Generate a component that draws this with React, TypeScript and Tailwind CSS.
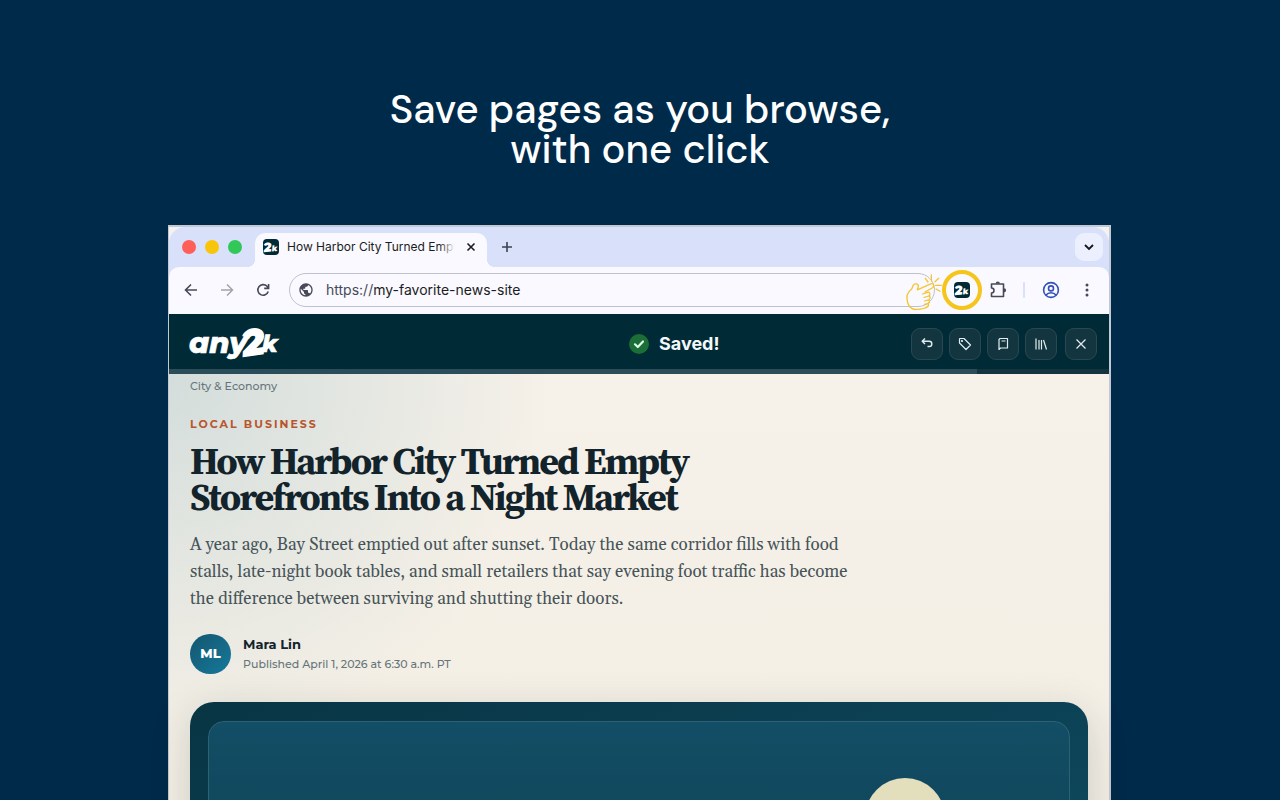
import { ReactNode } from 'react';

const montserrat = "font-['Montserrat','Inter',sans-serif]";

interface IconButtonProps {
  label: string;
  className?: string;
  children: ReactNode;
}

function IconButton({ label, className = '', children }: IconButtonProps) {
  return (
    <button aria-label={label} className={`flex items-center justify-center flex-shrink-0 ${className}`}>
      {children}
    </button>
  );
}

function ActionButton({ label, className = '', children }: IconButtonProps) {
  return (
    <IconButton
      label={label}
      className={`w-8 h-8 rounded-[9px] border border-[#2b4852] bg-[#12353f] text-[#e3edf0] ${className}`}
    >
      <svg viewBox="0 0 16 16" className="w-4 h-4" fill="none" stroke="currentColor" strokeWidth="1.2" strokeLinejoin="round">
        {children}
      </svg>
    </IconButton>
  );
}

function AppBadge() {
  return (
    <svg viewBox="0 0 16 16" className="w-4 h-4 flex-shrink-0 overflow-visible">
      <rect width="16" height="16" rx="4" fill="#002a35" />
      <g transform="rotate(-6 8 8)" fill="#fff" fontFamily="Montserrat, Inter, sans-serif" fontWeight="900" fontStyle="italic">
        <text x="0.5" y="12.5" fontSize="13">2</text>
        <text x="8.5" y="12.5" fontSize="8">k</text>
      </g>
    </svg>
  );
}

function Logo() {
  return (
    <svg viewBox="0 0 92 40" className="w-[92px] h-10 overflow-visible" role="img" aria-label="any2k">
      <g fill="#fff" stroke="#fff" fontFamily="Montserrat, Inter, sans-serif" fontWeight="800" fontStyle="italic">
        <text x="0" y="29" fontSize="29" strokeWidth="0.6">any</text>
        <text x="54" y="31" fontSize="36" strokeWidth="1.6" transform="rotate(-8 64 22)">2</text>
        <text x="73" y="28" fontSize="23" strokeWidth="0.6">k</text>
      </g>
    </svg>
  );
}

function ClickHand() {
  return (
    <svg viewBox="0 0 40 40" className="w-10 h-10" fill="none" stroke="#f5c431" strokeWidth="1.3" strokeLinecap="round" strokeLinejoin="round">
      <path d="M21 20l7.5-4.3c2.4-1.6 1-4.8-1.8-3.9L13.3 17.8l1-3.3c.5-2.6-3.8-3.7-5-1.4L7.7 17C3.5 20 2 25 3.6 30.5 5 35 8.5 38 13 37.4c4-.3 8-.8 10-2.4" />
      <path d="M18.5 22l5-1.7c2.6-.6 3.4 2.7 1 3.7L20 25.5M24.7 24c2 .4 2 3-.2 3.8L20.5 29M24.5 28c1.6.8 1.3 3-.7 3.6L20.5 32.5M23.8 31.7c1.2 1 .8 2.7-.8 3.3" />
      <path d="M21.3 6.3l2.7 3.7M27.3 3l.2 6M34.7 6.3L31 9.7M31.5 13.3h6M32 17l4 2.3" />
    </svg>
  );
}

function TabStrip() {
  return (
    <div className="flex items-end h-10 pl-[13px] pr-[6px] rounded-t-2xl bg-[#d9e0fa]">
      <div className="flex items-center gap-[9px] h-10">
        <span className="w-[14px] h-[14px] rounded-full bg-[#fe5f58]" />
        <span className="w-[14px] h-[14px] rounded-full bg-[#f9c50b]" />
        <span className="w-[14px] h-[14px] rounded-full bg-[#32c759]" />
      </div>
      <div className="relative flex items-center w-[232px] h-[34px] ml-[13px] pl-2 pr-[10px] pb-[6px] rounded-t-[10px] bg-[#f9f9ff]">
        <span className="absolute bottom-0 right-full w-2 h-2 bg-[radial-gradient(circle_at_top_left,transparent_8px,#f9f9ff_8px)]" />
        <span className="absolute bottom-0 left-full w-2 h-2 bg-[radial-gradient(circle_at_top_right,transparent_8px,#f9f9ff_8px)]" />
        <AppBadge />
        <div className="relative flex-1 ml-2 overflow-hidden whitespace-nowrap text-xs text-[#1b1c22]">
          How Harbor City Turned Empty
          <span className="absolute inset-y-0 right-0 w-4 bg-gradient-to-r from-transparent to-[#f9f9ff]" />
        </div>
        <IconButton label="Close tab" className="w-3 h-4 ml-[10px]">
          <svg viewBox="0 0 10 10" className="w-[10px] h-[10px]" stroke="#1b1c22" strokeWidth="1.6">
            <path d="M1.5 1.5l7 7M8.5 1.5l-7 7" />
          </svg>
        </IconButton>
      </div>
      <IconButton label="New tab" className="w-7 h-10 ml-[6px]">
        <svg viewBox="0 0 12 12" className="w-3 h-3" stroke="#3c4254" strokeWidth="1.6">
          <path d="M6 1v10M1 6h10" />
        </svg>
      </IconButton>
      <IconButton label="Search tabs" className="w-7 h-7 ml-auto mb-[6px] rounded-[9px] bg-[#eceffd]">
        <svg viewBox="0 0 10 10" className="w-[10px] h-[10px]" fill="none" stroke="#15161c" strokeWidth="1.8">
          <path d="M1 3l4 4 4-4" />
        </svg>
      </IconButton>
    </div>
  );
}

function Toolbar() {
  return (
    <div className="bg-[#d9e0fa]">
      <div className="flex items-center h-[47px] pl-3 pr-3 pb-px rounded-t-[10px] bg-[#f9f9ff] text-[#474958]">
        <IconButton label="Back" className="w-5 h-5">
          <svg viewBox="0 0 14 14" className="w-[14px] h-[14px]" fill="none" stroke="currentColor" strokeWidth="1.6">
            <path d="M13 7H2M7 1.5L1.5 7 7 12.5" />
          </svg>
        </IconButton>
        <IconButton label="Forward" className="w-5 h-5 ml-4 text-[#a2a3ac]">
          <svg viewBox="0 0 14 14" className="w-[14px] h-[14px]" fill="none" stroke="currentColor" strokeWidth="1.5">
            <path d="M1 7h11M7 1.5L12.5 7 7 12.5" />
          </svg>
        </IconButton>
        <IconButton label="Reload" className="w-5 h-5 ml-4">
          <svg viewBox="0 0 14 14" className="w-[14px] h-[14px]" fill="none" stroke="currentColor" strokeWidth="1.6">
            <path d="M12.2 8.5A5.3 5.3 0 1 1 11 3.3L12.4 5M12.6 1v4.4H8.2" />
          </svg>
        </IconButton>
        <label className="flex items-center flex-1 h-[34px] ml-4 pl-2 rounded-full border border-[#bfc1cc] text-sm">
          <svg viewBox="0 0 24 24" className="w-4 h-4 flex-shrink-0" fill="#474958">
            <path d="M12 2C6.48 2 2 6.48 2 12s4.48 10 10 10 10-4.48 10-10S17.52 2 12 2zm-1 17.93c-3.95-.49-7-3.85-7-7.93 0-.62.08-1.21.21-1.79L9 15v1c0 1.1.9 2 2 2v1.93zm6.9-2.54c-.26-.81-1-1.39-1.9-1.39h-1v-3c0-.55-.45-1-1-1H8v-2h2c.55 0 1-.45 1-1V7h2c1.1 0 2-.9 2-2v-.41c2.93 1.19 5 4.06 5 7.41 0 2.08-.8 3.97-2.1 5.39z" />
          </svg>
          <span className="ml-3">https://</span>
          <input
            type="text"
            aria-label="Address"
            defaultValue="my-favorite-news-site"
            className="flex-1 min-w-0 bg-transparent outline-none text-[#1b1c22]"
          />
        </label>
        <div className="relative ml-[7px]">
          <IconButton label="any2k" className="w-10 h-10 rounded-full border-4 border-[#f5c51c]">
            <AppBadge />
          </IconButton>
          <div className="absolute top-[2px] -left-[38px] pointer-events-none">
            <ClickHand />
          </div>
        </div>
        <IconButton label="Extensions" className="w-5 h-5 ml-[6px]">
          <svg viewBox="0 0 18 18" className="w-[18px] h-[18px]" fill="none" stroke="currentColor" strokeWidth="1.6" strokeLinejoin="round">
            <path d="M2.5 3H14.5V15.5H2.5V12C5.8 12 5.8 7 2.5 7z" />
            <path d="M7.5 2.5a1.3 1.3 0 0 1 2.6 0M15 8a1.3 1.3 0 0 1 0 2.6" fill="currentColor" />
          </svg>
        </IconButton>
        <span className="w-[2px] h-4 ml-[15px] rounded bg-[#d9e0fa]" />
        <IconButton label="Profile" className="w-5 h-5 ml-4 text-[#3350b8]">
          <svg viewBox="0 0 18 18" className="w-[18px] h-[18px]" fill="none" stroke="currentColor" strokeWidth="1.6">
            <circle cx="9" cy="9" r="7.4" />
            <circle cx="9" cy="7.4" r="2.5" />
            <path d="M4 14c2.5-3 7.5-3 10 0" />
          </svg>
        </IconButton>
        <IconButton label="Menu" className="w-5 h-5 ml-4">
          <svg viewBox="0 0 4 16" className="w-1 h-4" fill="currentColor">
            <circle cx="2" cy="3" r="1.5" />
            <circle cx="2" cy="8" r="1.5" />
            <circle cx="2" cy="13" r="1.5" />
          </svg>
        </IconButton>
      </div>
    </div>
  );
}

function SavedBar() {
  return (
    <div className="bg-[#002a35]">
      <div className="grid grid-cols-[1fr_20px_1fr] items-center h-[55px] px-3 pt-1">
        <div className="pl-2">
          <Logo />
        </div>
        <div className="flex items-center gap-[10px] text-[#f3f8fa]">
          <svg viewBox="0 0 20 20" className="w-5 h-5 flex-shrink-0">
            <circle cx="10" cy="10" r="10" fill="#1b6e35" />
            <path d="M6 10.3l2.8 2.7L14 7.5" fill="none" stroke="#dcfce7" strokeWidth="2.2" strokeLinecap="round" strokeLinejoin="round" />
          </svg>
          <span className="text-lg font-bold">Saved!</span>
        </div>
        <div className="flex justify-end gap-[6px]">
          <ActionButton label="Undo">
            <path d="M6 2.5L3.2 5.3 6 8M3.2 5.3h7a2.5 2.5 0 0 1 0 5.2H8.5" strokeWidth="1.4" />
          </ActionButton>
          <ActionButton label="Add tag">
            <path d="M2.5 3v4l6.5 6.5 4.5-4.5L7 2.5H3z" />
            <circle cx="5" cy="5" r="0.5" fill="currentColor" />
          </ActionButton>
          <ActionButton label="Read">
            <path d="M4 14V3.5L5 2.5h7.5v9.5H5.5L4 13.5M6.5 5h4" />
          </ActionButton>
          <ActionButton label="Library">
            <path d="M3 2.5v11M6 4v9.5M8.5 4v9.5M10.5 4l3 9.5" />
          </ActionButton>
          <ActionButton label="Close" className="ml-[2px]">
            <path d="M3.5 3.5l9 9M12.5 3.5l-9 9" />
          </ActionButton>
        </div>
      </div>
      <div className="h-[5px] bg-[#12353f]">
        <div className="h-full w-[86%] bg-[#2b4c59]" />
      </div>
    </div>
  );
}

function Article() {
  return (
    <article className="flex-1 px-[21px] pt-1 bg-[radial-gradient(circle_at_top_left,#d3dddb_0px,transparent_380px),linear-gradient(#f6f1e9,#f2ede0)]">
      <p className={`text-[11px] leading-4 font-medium text-[#66757a] ${montserrat}`}>City &amp; Economy</p>
      <p className={`mt-[22px] text-[11px] leading-4 font-bold tracking-[2px] text-[#b9552c] ${montserrat}`}>
        LOCAL BUSINESS
      </p>
      <h1 className="mt-[11px] text-[38px] leading-9 font-bold tracking-tighter text-[#13232b] font-['Source_Serif_4','Source_Serif_Pro','Liberation_Serif',serif]">
        How Harbor City Turned Empty
        <br />
        Storefronts Into a Night Market
      </h1>
      <p className="mt-[17px] max-w-[690px] text-[17px] leading-[27px] text-[#475459] font-['Georgia','Gelasio','Liberation_Serif',serif]">
        A year ago, Bay Street emptied out after sunset. Today the same corridor fills with food
        <br />
        stalls, late-night book tables, and small retailers that say evening foot traffic has become
        <br />
        the difference between surviving and shutting their doors.
      </p>
      <div className={`flex items-center gap-3 mt-[21px] ${montserrat}`}>
        <div className="flex items-center justify-center w-[41px] h-10 rounded-full bg-gradient-to-br from-[#14566f] to-[#147a9c] text-[13px] font-extrabold text-white">
          ML
        </div>
        <div>
          <p className="text-[13px] leading-5 font-bold text-[#13232b]">Mara Lin</p>
          <p className="text-[11px] leading-5 font-medium text-[#66757a]">Published April 1, 2026 at 6:30 a.m. PT</p>
        </div>
      </div>
      <div className="mt-7 h-[420px] px-[18px] py-[19px] rounded-3xl bg-gradient-to-br from-[#083544] to-[#115068] shadow-[0_12px_40px_rgba(19,35,43,0.18)]">
        <div className="h-full pt-14 pr-[124px] rounded-2xl border border-[#2d6275] bg-gradient-to-b from-[#124e66] to-[#0b3340]">
          <div className="w-20 h-20 ml-auto rounded-full bg-[#e3dfbd]" />
        </div>
      </div>
    </article>
  );
}

export default function App() {
  return (
    <main className="flex flex-col items-center h-screen overflow-hidden bg-[#002a4a] font-['Inter',sans-serif]">
      <h2 className="mt-[89px] text-center text-[40px] leading-10 font-medium text-white font-['DM_Sans','Inter',sans-serif]">
        Save pages as you browse,
        <br />
        with one click
      </h2>
      <div className="w-full max-w-[944px] flex-shrink-0 mt-14 pr-px">
        <div className="flex flex-col border border-t-2 border-r-2 border-[#c3c9d3] bg-[#f4f3f1]">
          <TabStrip />
          <Toolbar />
          <SavedBar />
          <Article />
        </div>
      </div>
    </main>
  );
}
